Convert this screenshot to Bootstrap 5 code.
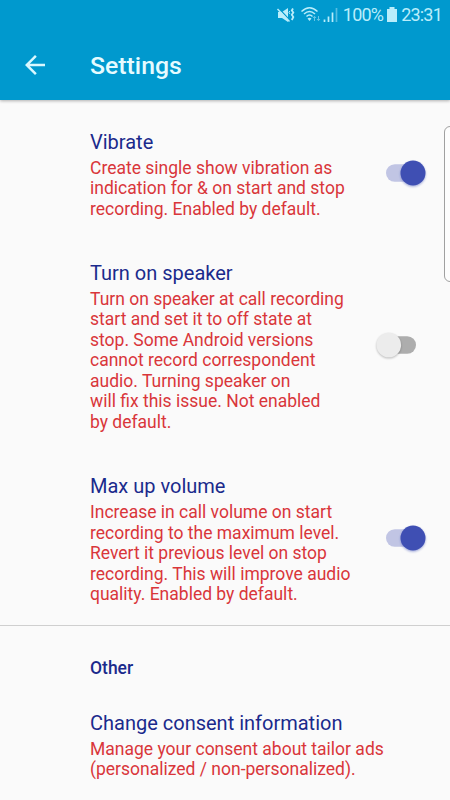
<!DOCTYPE html>
<html lang="en">
<head>
<meta charset="utf-8">
<meta name="viewport" content="width=device-width, initial-scale=1">
<title>Settings</title>
<link rel="stylesheet" href="https://cdn.jsdelivr.net/npm/bootstrap@5.3.0/dist/css/bootstrap.min.css">
<style>
body{background:#fafafa;font-family:Roboto,sans-serif;height:800px}
.app-head{background:#0099ce;height:100px;box-shadow:0 1px 3px rgba(0,0,0,.3)}
.status{height:30px;padding-right:8px;color:#b9edfb}
.status-text{white-space:nowrap;font-size:18px;line-height:32px;letter-spacing:-.8px}
.toolbar{height:70px;padding-left:20px}
.back{width:30px;height:30px;margin-right:40px}
.app-title{font-size:24.8px;line-height:30px;font-weight:500;color:#e6fbff;padding-top:2px}
.prefs{padding-top:9.6px}
.pref{padding:21.25px 24px 21.6px 90px}
.pref-title{font-size:20px;line-height:23.5px;color:#1a2a8c;margin-bottom:3.4px}
.pref-text{font-size:17.5px;line-height:20.5px;color:#d9363a;white-space:nowrap}
.toggle{width:50px;height:30px;flex:none;position:relative;top:-1.8px;overflow:visible}
.group-label{font-size:17.5px;line-height:20.5px;font-weight:500;color:#1a2a8c;padding:31.5px 0 12.3px 90px;border-top:1px solid #cfcfcf;margin-top:-1px}
.edge-panel{position:absolute;left:444px;top:126px;width:14px;height:156px;border:1px solid #a0a0a0;border-radius:6px;background:#fdfdfd}
</style>
</head>
<body class="position-relative overflow-hidden">
<header class="app-head position-relative">
  <div class="status d-flex align-items-center justify-content-end">
    <svg width="68" height="30" viewBox="0 0 68 30" class="flex-shrink-0" fill="none" stroke="#b9edfb">
      <path d="M3 12h4l6-4v14l-6-4H3z" fill="#b9edfb" stroke="none"/>
      <path d="M3.500 8l12 13" stroke="#0099ce" stroke-width="1.200"/>
      <path d="M2.500 9l12 12.500" stroke-width="1.500"/>
      <path d="M18 8.500l-1.200 2 1.500 2-1.500 2.300 1.500 2.200-1.500 3" stroke-width="1.800"/>
      <path d="M14.800 11l-.8 1.500 1 1.500" stroke-width="1"/>
      <path d="M26.500 11.500q8-7.500 16 0M29 14q5.500-5 11 0M31.500 16.500q3-3 6 0" stroke-width="1.500"/>
      <path d="M32.500 18.500q2-1.500 4 0l-2 2.500z" fill="#b9edfb" stroke="none"/>
      <path d="M39.500 21v-4.500M38 18l1.500-1.700L41 18M43.500 16v4.500M42 19l1.500 1.700L45 19" stroke="#65c5e5"/>
      <path d="M49.500 19.500v2.500M53.500 16.500v5.500M57.500 12.500v9.500" stroke-width="1.700"/>
      <path d="M61.500 8v14" stroke="#55bee2" stroke-width="1.700"/>
    </svg>
    <span class="status-text">100%</span>
    <svg width="10" height="30" viewBox="0 0 10 30" class="flex-shrink-0 ms-1 me-1"><path d="M2.500 7h5v2H10v13H0V9h2.500z" fill="#b9edfb"/></svg>
    <span class="status-text">23:31</span>
  </div>
  <div class="toolbar d-flex align-items-center">
    <svg class="back flex-shrink-0" viewBox="0 0 24 24"><path d="M20 11H7.830l5.590-5.590L12 4l-8 8 8 8 1.410-1.410L7.830 13H20z" fill="#d9f8ff"/></svg>
    <h1 class="app-title m-0">Settings</h1>
  </div>
</header>
<main class="prefs">
  <section class="pref d-flex align-items-center justify-content-between">
    <div>
      <div class="pref-title">Vibrate</div>
      <div class="pref-text">Create single show vibration as<br>indication for &amp; on start and stop<br>recording. Enabled by default.</div>
    </div>
    <svg class="toggle" viewBox="0 0 50 30"><use href="#on"/></svg>
  </section>
  <section class="pref d-flex align-items-center justify-content-between">
    <div>
      <div class="pref-title">Turn on speaker</div>
      <div class="pref-text">Turn on speaker at call recording<br>start and set it to off state at<br>stop. Some Android versions<br>cannot record correspondent<br>audio. Turning speaker on<br>will fix this issue. Not enabled<br>by default.</div>
    </div>
    <svg class="toggle" viewBox="0 0 50 30"><use href="#off"/></svg>
  </section>
  <section class="pref d-flex align-items-center justify-content-between">
    <div>
      <div class="pref-title">Max up volume</div>
      <div class="pref-text">Increase in call volume on start<br>recording to the maximum level.<br>Revert it previous level on stop<br>recording. This will improve audio<br>quality. Enabled by default.</div>
    </div>
    <svg class="toggle" viewBox="0 0 50 30"><use href="#on"/></svg>
  </section>
  <h2 class="group-label mb-0">Other</h2>
  <section class="pref">
    <div class="pref-title">Change consent information</div>
    <div class="pref-text">Manage your consent about tailor ads<br>(personalized / non-personalized).</div>
  </section>
</main>
<aside class="edge-panel"></aside>
<svg width="0" height="0" class="position-absolute">
  <defs>
    <filter id="soft" x="-30%" y="-30%" width="160%" height="160%"><feGaussianBlur stdDeviation="1"/></filter>
    <g id="on">
      <rect x="10" y="6.300" width="30" height="17.500" rx="8.750" fill="#c1c5e4"/>
      <circle cx="37" cy="16.200" r="12.500" fill="#3f51b5" opacity=".45" filter="url(#soft)"/>
      <circle cx="37" cy="15" r="12.500" fill="#3f4fb3"/>
    </g>
    <g id="off">
      <rect x="10" y="6.300" width="30" height="17.500" rx="8.750" fill="#adadad"/>
      <circle cx="12.800" cy="16" r="12.300" fill="#000" opacity=".25" filter="url(#soft)"/>
      <circle cx="12.800" cy="15" r="12.300" fill="#ececec"/>
    </g>
  </defs>
</svg>
<script src="https://cdn.jsdelivr.net/npm/bootstrap@5.3.0/dist/js/bootstrap.bundle.min.js"></script>
</body>
</html>
